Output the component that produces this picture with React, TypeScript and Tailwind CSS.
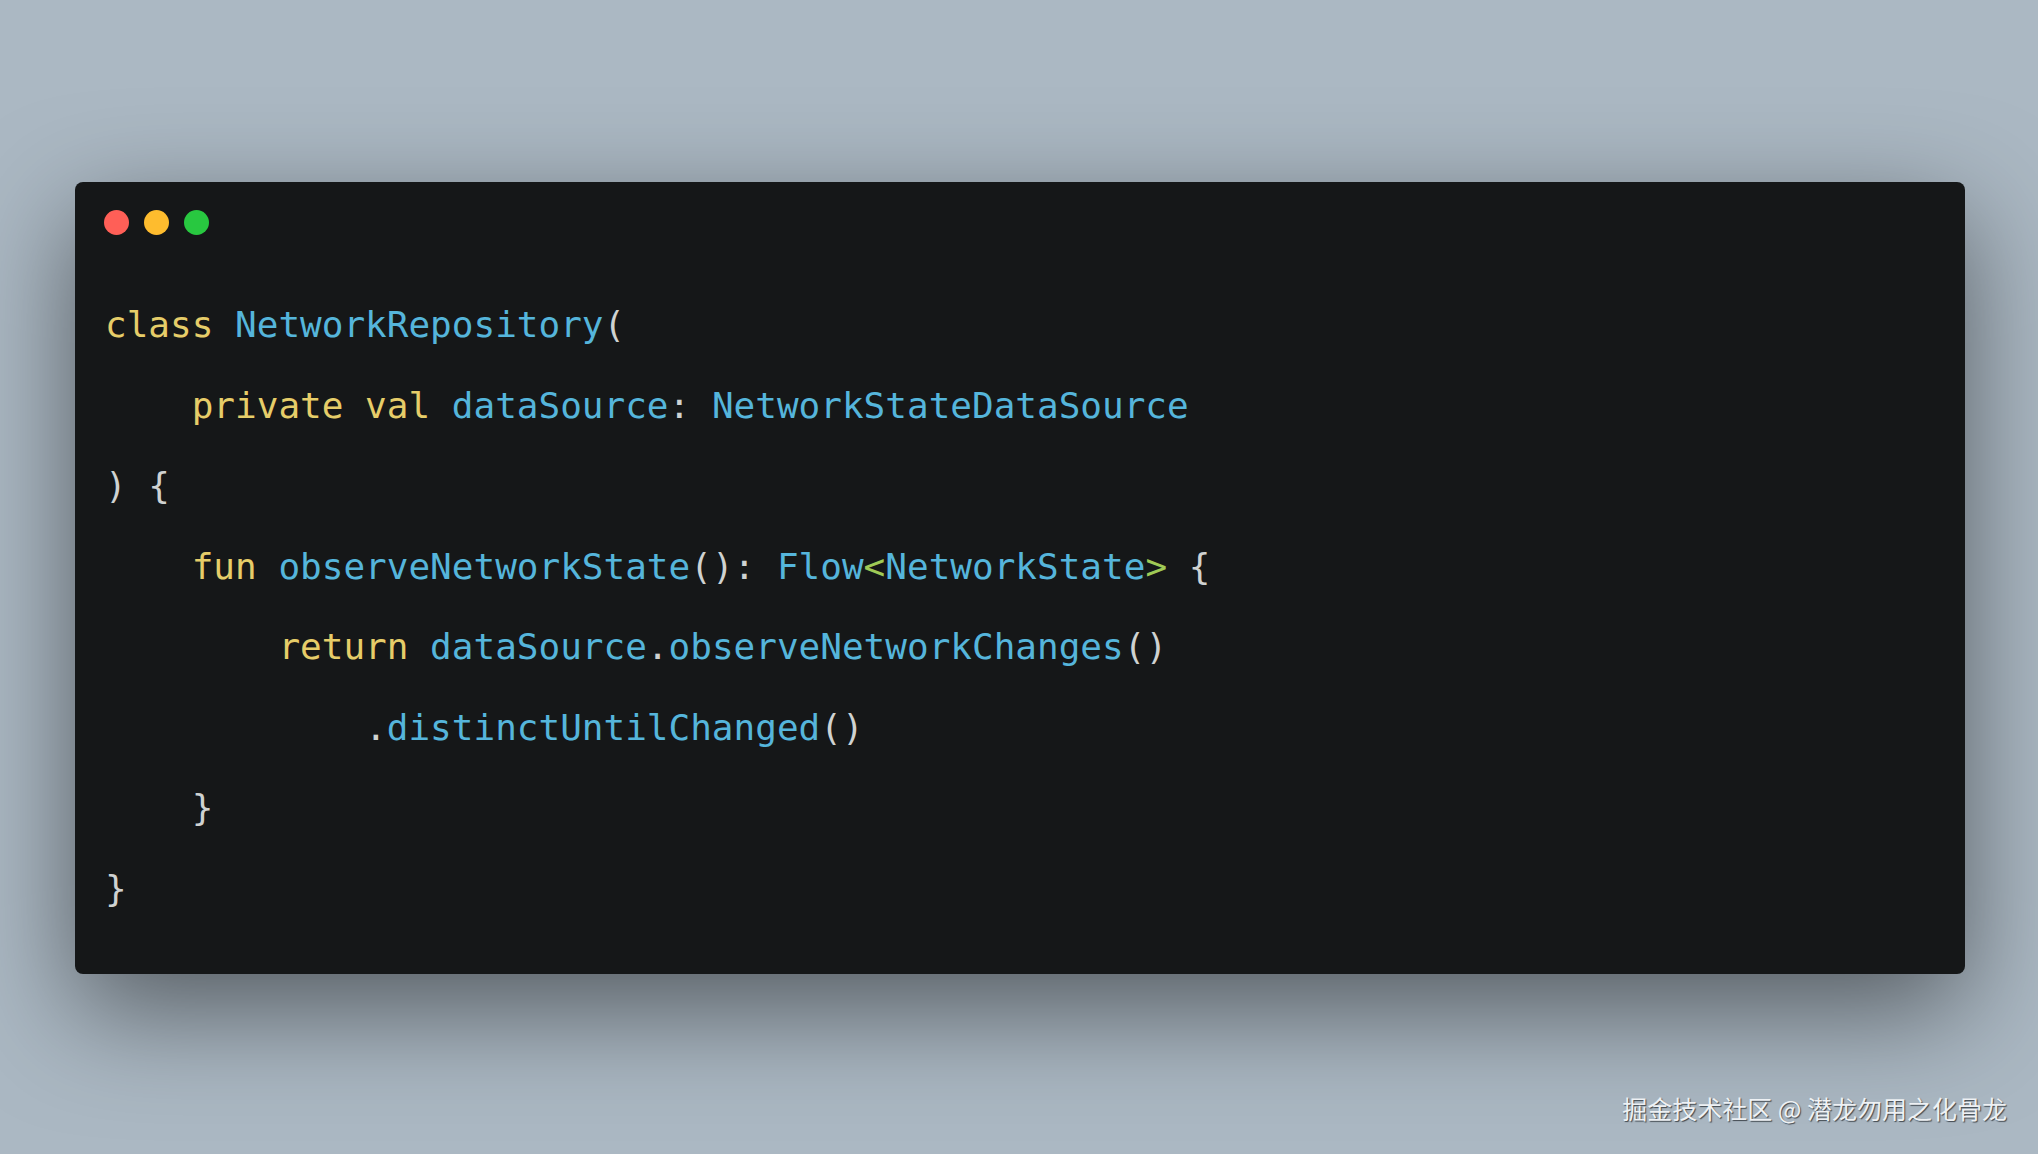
import React from "react";

type Tok = { t: string; c: "k" | "v" | "p" | "o" };

const color: Record<Tok["c"], string> = {
  k: "text-[#e6cd69]",
  v: "text-[#55b5db]",
  p: "text-[#cfd2d1]",
  o: "text-[#9fca56]",
};

const lines: Tok[][] = [
  [
    { t: "class", c: "k" },
    { t: " NetworkRepository", c: "v" },
    { t: "(", c: "p" },
  ],
  [
    { t: "    private val", c: "k" },
    { t: " dataSource", c: "v" },
    { t: ":", c: "p" },
    { t: " NetworkStateDataSource", c: "v" },
  ],
  [{ t: ") {", c: "p" }],
  [
    { t: "    fun", c: "k" },
    { t: " observeNetworkState", c: "v" },
    { t: "():", c: "p" },
    { t: " Flow", c: "v" },
    { t: "<", c: "o" },
    { t: "NetworkState", c: "v" },
    { t: ">", c: "o" },
    { t: " {", c: "p" },
  ],
  [
    { t: "        return", c: "k" },
    { t: " dataSource", c: "v" },
    { t: ".", c: "p" },
    { t: "observeNetworkChanges", c: "v" },
    { t: "()", c: "p" },
  ],
  [
    { t: "            .", c: "p" },
    { t: "distinctUntilChanged", c: "v" },
    { t: "()", c: "p" },
  ],
  [{ t: "    }", c: "p" }],
  [{ t: "}", c: "p" }],
];

export default function App() {
  return (
    <div className="relative h-[1154px] w-full overflow-hidden bg-[#abb8c3] pt-[182px] pl-[75px] pr-[73px]">
      <div className="h-[792px] w-[1890px] rounded-[8px] bg-[#151718] pt-[28px] pl-[29px] shadow-[0_36px_110px_rgba(0,0,0,0.5)]">
        <div className="flex h-[25px] items-center gap-[15px]">
          <span className="block h-[25px] w-[25px] rounded-full bg-[#ff5f57]" />
          <span className="block h-[25px] w-[25px] rounded-full bg-[#febc2e]" />
          <span className="block h-[25px] w-[25px] rounded-full bg-[#28c840]" />
        </div>
        <div
          className="mt-[50px] ml-[1px] text-[36px] leading-[80.5px] whitespace-pre"
          style={{ fontFamily: '"DejaVu Sans Mono", "Liberation Mono", monospace' }}
        >
          {lines.map((ln, i) => (
            <div key={i} className="h-[80.5px]">
              {ln.map((tok, j) => (
                <span key={j} className={color[tok.c]}>
                  {tok.t}
                </span>
              ))}
            </div>
          ))}
        </div>
      </div>
      <div
        className="absolute right-[31px] top-[1093px] text-[25px] leading-[30px] text-[#eef1f4] [text-shadow:1px_1px_1px_rgba(30,35,40,0.75)]"
        style={{ fontFamily: '"Noto Sans CJK SC", "Noto Sans", sans-serif' }}
      >
        掘金技术社区 @ 潜龙勿用之化骨龙
      </div>
    </div>
  );
}
